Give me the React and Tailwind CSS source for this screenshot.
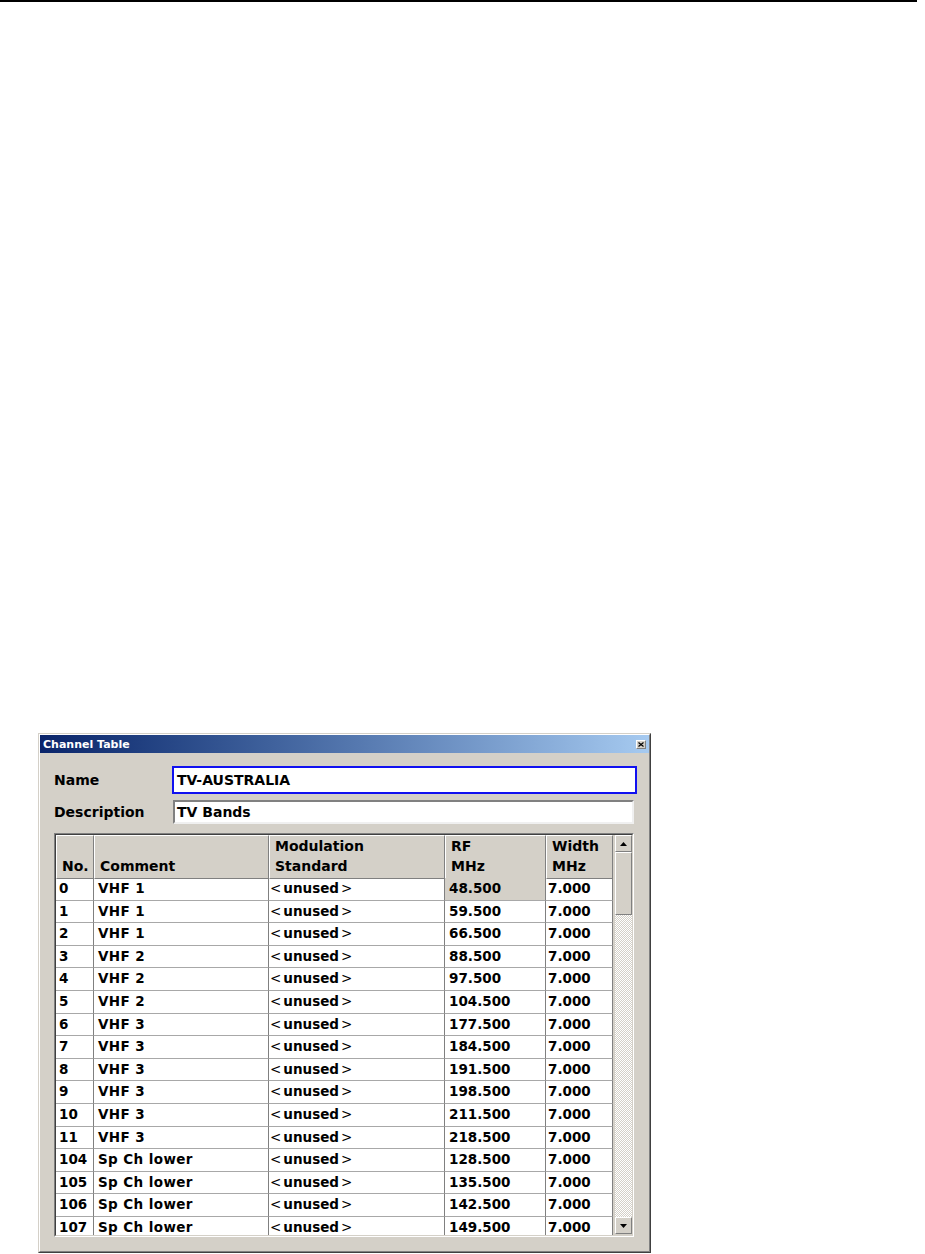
import React from 'react';

const rows = [
  ['0', 'VHF 1', '48.500'],
  ['1', 'VHF 1', '59.500'],
  ['2', 'VHF 1', '66.500'],
  ['3', 'VHF 2', '88.500'],
  ['4', 'VHF 2', '97.500'],
  ['5', 'VHF 2', '104.500'],
  ['6', 'VHF 3', '177.500'],
  ['7', 'VHF 3', '184.500'],
  ['8', 'VHF 3', '191.500'],
  ['9', 'VHF 3', '198.500'],
  ['10', 'VHF 3', '211.500'],
  ['11', 'VHF 3', '218.500'],
  ['104', 'Sp Ch lower', '128.500'],
  ['105', 'Sp Ch lower', '135.500'],
  ['106', 'Sp Ch lower', '142.500'],
  ['107', 'Sp Ch lower', '149.500'],
];

const cols = 'grid grid-cols-[38px_175px_176px_101px_67px]';
const raised = 'border border-t-white border-l-white border-r-[#808080] border-b-[#808080] bg-[#d4d0c8]';
const cell = 'border-r border-b border-r-[#808080] border-b-[#a8a8a8]';

function HeadCell({ top, bottom }) {
  return (
    <div className={`${raised} flex flex-col justify-end pl-[5px] pb-[2px] leading-[20px]`}>
      {top && <span>{top}</span>}
      <span>{bottom}</span>
    </div>
  );
}

function Arrow({ down }) {
  return (
    <svg width="7" height="4" viewBox="0 0 7 4">
      <polygon points={down ? '0,0 7,0 3.5,4' : '3.5,0 7,4 0,4'} fill="#000" />
    </svg>
  );
}

export default function App() {
  return (
    <div className="w-[925px] h-[1254px] bg-white overflow-hidden font-['DejaVu_Sans',sans-serif] text-black">
      <div className="w-[917px] h-[2px] bg-black" />

      {/* dialog */}
      <div className="mt-[731px] ml-[38px] w-[613px] h-[520px] border border-t-[#d4d0c8] border-l-[#d4d0c8] border-r-[#404040] border-b-[#404040]">
        <div className="h-full bg-[#d4d0c8] border border-t-white border-l-white border-r-[#808080] border-b-[#808080] flex flex-col">
          <div className="h-[18px] bg-linear-to-r from-[#0a246a] to-[#a6caf0] flex items-center justify-between pl-[3px] pr-[3px]">
            <span className="text-white font-bold text-[11px] leading-none">Channel Table</span>
            <div className={`${raised} w-[10px] h-[9px] flex items-center justify-center`}>
              <svg width="6" height="5" viewBox="0 0 6 5">
                <path d="M0.5 0.5 L5.5 4.5 M5.5 0.5 L0.5 4.5" stroke="#000" strokeWidth="1.2" />
              </svg>
            </div>
          </div>

          <div className="pl-[14px] flex flex-col font-bold text-[14px]">
            <div className="mt-[13px] flex items-center h-[28px]">
              <span className="w-[118px]">Name</span>
              <div className="w-[465px] h-[28px] border-2 border-[#1010f0] bg-white flex items-center pl-[3px]">
                TV-AUSTRALIA
              </div>
            </div>
            <div className="mt-[6px] flex items-center h-[24px]">
              <span className="w-[119px]">Description</span>
              <div className="w-[461px] h-[24px] border-2 border-t-[#808080] border-l-[#808080] border-r-[#f0f0f0] border-b-[#f0f0f0] bg-white flex items-center pl-[2px]">
                TV Bands
              </div>
            </div>

            {/* table */}
            <div className="mt-[9px] w-[580px] h-[404px] border border-t-[#808080] border-l-[#808080] border-r-white border-b-white">
              <div className="h-full flex border border-t-[#404040] border-l-[#404040] border-r-[#d4d0c8] border-b-[#d4d0c8] bg-white">
                <div className="w-[557px] flex flex-col">
                  <div className={`${cols} h-[43px]`}>
                    <HeadCell bottom="No." />
                    <HeadCell bottom="Comment" />
                    <HeadCell top="Modulation" bottom="Standard" />
                    <HeadCell top="RF" bottom="MHz" />
                    <HeadCell top="Width" bottom="MHz" />
                  </div>
                  <div className="flex-1 overflow-hidden text-[13.5px]">
                    {rows.map(([no, comment, rf], i) => (
                      <div key={no} className={`${cols} h-[22.6px] leading-[21px]`}>
                        <div className={`pl-[3px] ${cell}`}>{no}</div>
                        <div className={`pl-[4px] tracking-[0.4px] ${cell}`}>{comment}</div>
                        <div className={`pl-[1px] ${cell}`}>
                          <span className="font-normal mr-[2px]">&lt;</span>unused<span className="font-normal ml-[2px]">&gt;</span>
                        </div>
                        <div className={`pl-[4px] ${cell} ${i === 0 ? 'bg-[#d4d0c8]' : ''}`}>{rf}</div>
                        <div className={`pl-[2px] ${cell}`}>7.000</div>
                      </div>
                    ))}
                  </div>
                </div>

                {/* scrollbar */}
                <div className="w-[19px] pl-[2px] flex flex-col bg-[#d4d0c8]">
                  <div className={`${raised} h-[17px] flex items-center justify-center`}>
                    <Arrow />
                  </div>
                  <div className={`${raised} h-[63px]`} />
                  <div className="flex-1 bg-[repeating-conic-gradient(#d4d0c8_0%_25%,#ffffff_0%_50%)] bg-[length:2px_2px]" />
                  <div className={`${raised} h-[17px] flex items-center justify-center mb-[1px]`}>
                    <Arrow down />
                  </div>
                </div>
              </div>
            </div>
          </div>
        </div>
      </div>
    </div>
  );
}
